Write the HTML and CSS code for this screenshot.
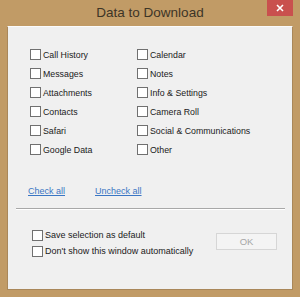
FILE: index.html
```html
<!DOCTYPE html>
<html lang="en">
<head>
<meta charset="UTF-8" />
<meta name="viewport" content="width=device-width, initial-scale=1" />
<title>Data to Download</title>
<link rel="stylesheet" href="styles.css">
</head>
<body>
  <div class="window">
    <div class="titlebar">
      <span class="title">Data to Download</span>
      <button class="close">
        <svg width="8" height="8" viewBox="0 0 8 8"><path d="M1 1L7 7M7 1L1 7" stroke="#fff" stroke-width="1.6"/></svg>
      </button>
    </div>
    <div class="client">
      <div class="options">
        <label class="check"><span class="box"></span>Call History</label>
        <label class="check"><span class="box"></span>Calendar</label>
        <label class="check"><span class="box"></span>Messages</label>
        <label class="check"><span class="box"></span>Notes</label>
        <label class="check"><span class="box"></span>Attachments</label>
        <label class="check"><span class="box"></span>Info &amp; Settings</label>
        <label class="check"><span class="box"></span>Contacts</label>
        <label class="check"><span class="box"></span>Camera Roll</label>
        <label class="check"><span class="box"></span>Safari</label>
        <label class="check"><span class="box"></span>Social &amp; Communications</label>
        <label class="check"><span class="box"></span>Google Data</label>
        <label class="check"><span class="box"></span>Other</label>
      </div>
      <div class="links">
        <a href="#">Check all</a>
        <a href="#">Uncheck all</a>
      </div>
      <div class="separator"></div>
      <div class="footer">
        <div class="footer-checks">
          <label class="check"><span class="box"></span>Save selection as default</label>
          <label class="check"><span class="box"></span>Don't show this window automatically</label>
        </div>
        <button class="ok" disabled>OK</button>
      </div>
    </div>
  </div>
</body>
</html>
```

FILE: styles.css
```css
body {
  margin: 0;
  font-family: "Liberation Sans", Arial, sans-serif;
  background: #c19b66;
}
.window {
  width: 300px;
  height: 297px;
  box-sizing: border-box;
  background: #c19b66;
  padding: 0 7px 7px 7px;
  display: flex;
  flex-direction: column;
}
.titlebar {
  height: 26px;
  position: relative;
  display: flex;
  justify-content: center;
  align-items: center;
}
.title {
  font-size: 13.5px;
  color: #3d3526;
  margin-top: -1px;
}
.close {
  position: absolute;
  right: 0;
  top: 0;
  width: 26px;
  height: 16px;
  border: none;
  padding: 0;
  background: #c9504e;
  display: flex;
  align-items: center;
  justify-content: center;
}
.client {
  flex: 1;
  background: #f0f0f0;
  border: 1px solid #a9875a;
  border-top-color: #fbfbfb;
  display: flex;
  flex-direction: column;
}
.options {
  display: grid;
  grid-template-columns: 107px 1fr;
  grid-auto-rows: 19px;
  padding: 18px 0 0 22px;
}
.check {
  display: flex;
  align-items: center;
  font-size: 8.8px;
  color: #1a1a1a;
}
.box {
  width: 9px;
  height: 9px;
  border: 1px solid #707070;
  background: #fff;
  margin-right: 2px;
}
.links {
  display: flex;
  gap: 30px;
  margin: 25px 0 0 20px;
  line-height: 14px;
}
.links a {
  font-size: 9px;
  color: #3a76c4;
  text-decoration: underline;
}
.separator {
  margin: 10px 7px 0 8px;
  height: 1px;
  background: #a8a8a8;
  border-bottom: 1px solid #fff;
}
.footer {
  display: flex;
  justify-content: space-between;
  margin: 17px 15px 0 24px;
}
.footer-checks .check {
  height: 16px;
  font-size: 9px;
}
.ok {
  width: 61px;
  height: 17px;
  margin-top: 6px;
  border: 1px solid #d6d6d6;
  background: #f4f4f4;
  color: #a6a6a6;
  font-family: "Liberation Sans", Arial, sans-serif;
  font-size: 9.5px;
  padding: 0;
}
```
